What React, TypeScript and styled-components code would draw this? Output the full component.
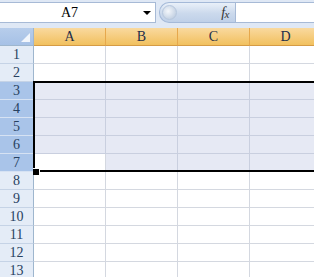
import styled, { createGlobalStyle } from 'styled-components';

const GlobalStyle = createGlobalStyle`
  html, body { margin: 0; padding: 0; background: #fff; }
  body { font-family: "Liberation Serif", "DejaVu Serif", serif; }
`;

const Window = styled.div`
  position: relative;
  width: 314px;
  height: 277px;
  overflow: hidden;
  background: #fff;
`;

const FormulaBar = styled.div`
  display: flex;
  align-items: stretch;
  height: 28px;
  padding: 2px 0 5px;
  box-sizing: border-box;
  background: #dfe8f5;
`;

const NameBox = styled.div`
  position: relative;
  display: flex;
  align-items: center;
  justify-content: center;
  width: 156px;
  background: #fff;
  border: 1px solid #a7bad6;
  border-left: none;
  box-sizing: border-box;
  font-size: 14px;
  color: #000;
  padding-right: 16px;
`;

const Arrow = styled.span`
  position: absolute;
  right: 4px;
  top: 8px;
  width: 0;
  height: 0;
  border-left: 4px solid transparent;
  border-right: 4px solid transparent;
  border-top: 4px solid #000;
`;

const FxButton = styled.div`
  display: flex;
  align-items: center;
  justify-content: space-between;
  width: 76px;
  margin-left: 3px;
  padding: 0 6px 0 2px;
  box-sizing: border-box;
  border: 1px solid #a4b9d8;
  border-right: none;
  border-radius: 10px 0 0 10px;
  background: linear-gradient(#e9f0f9, #cbd9ec 55%, #bfd0e8);
`;

const Knob = styled.span`
  width: 13px;
  height: 13px;
  border-radius: 50%;
  background: radial-gradient(circle at 40% 40%, #f4f7fb, #c6d3e4 70%, #aebfd6);
  border: 1px solid #b7c7dd;
`;

const Fx = styled.span`
  font-family: "Liberation Serif", "DejaVu Serif", serif;
  font-style: italic;
  font-size: 14px;
  color: #333;
  letter-spacing: -0.5px;

  & sub {
    font-size: 11px;
    vertical-align: -1px;
  }
`;

const FormulaInput = styled.div`
  flex: 1;
  background: #fff;
  border: 1px solid #a7bad6;
  border-right: none;
`;

const Sheet = styled.div`
  position: relative;
  display: grid;
  grid-template-columns: 34px repeat(4, 72px);
  grid-auto-rows: 18px;
`;

const Corner = styled.div`
  position: relative;
  background: linear-gradient(#b7cdeb, #a6c1e6);
  border-right: 1px solid #9eb6ce;
  border-bottom: 1px solid #9eb6ce;
  box-sizing: border-box;
`;

const CornerMark = styled.span`
  position: absolute;
  right: 3px;
  bottom: 3px;
  width: 0;
  height: 0;
  border-left: 9px solid transparent;
  border-bottom: 9px solid #f2f6fc;
`;

const ColHeader = styled.div`
  display: flex;
  align-items: center;
  justify-content: center;
  background: linear-gradient(#f9d99f, #f5ca78 60%, #f1c15f);
  border-right: 1px solid #e6a84c;
  border-bottom: 1px solid #d59b45;
  box-sizing: border-box;
  font-size: 14px;
  color: #1f2f4a;
`;

const RowHeader = styled.div<{ $selected: boolean }>`
  display: flex;
  align-items: center;
  justify-content: center;
  background: ${({ $selected }) => ($selected ? '#a9c4e9' : '#e4ecf7')};
  border-right: 1px solid #9eb6ce;
  border-bottom: 1px solid ${({ $selected }) => ($selected ? '#d6e2f3' : '#c5d3e6')};
  box-sizing: border-box;
  font-size: 14px;
  color: #27415f;
`;

const Cell = styled.div<{ $selected: boolean }>`
  background: ${({ $selected }) => ($selected ? '#e6e9f4' : '#fff')};
  border-right: 1px solid ${({ $selected }) => ($selected ? '#c9cfdf' : '#d4d8e0')};
  border-bottom: 1px solid ${({ $selected }) => ($selected ? '#c9cfdf' : '#d4d8e0')};
  box-sizing: border-box;
`;

const Selection = styled.div`
  position: absolute;
  left: 33px;
  top: 53px;
  width: 300px;
  height: 91px;
  border-top: 2px solid #000;
  border-bottom: 2px solid #000;
  border-left: 2px solid #000;
  box-sizing: border-box;
  pointer-events: none;
`;

const FillHandle = styled.div`
  position: absolute;
  left: 33px;
  top: 140px;
  width: 6px;
  height: 6px;
  background: #000;
  border-right: 1px solid #fff;
  border-top: 1px solid #fff;
`;

const COLUMNS = ['A', 'B', 'C', 'D'];
const ROWS = Array.from({ length: 13 }, (_, i) => i + 1);
const ACTIVE_ROW = 7;

export default function App() {
  return (
    <>
      <GlobalStyle />
      <Window>
        <FormulaBar>
          <NameBox>
            A7
            <Arrow />
          </NameBox>
          <FxButton>
            <Knob />
            <Fx>f<sub>x</sub></Fx>
          </FxButton>
          <FormulaInput />
        </FormulaBar>
        <Sheet>
          <Corner>
            <CornerMark />
          </Corner>
          {COLUMNS.map(c => (
            <ColHeader key={c}>{c}</ColHeader>
          ))}
          {ROWS.map(r => {
            const selected = r >= 3 && r <= 7;
            return [
              <RowHeader key={`h${r}`} $selected={selected}>{r}</RowHeader>,
              ...COLUMNS.map((c, ci) => (
                <Cell
                  key={`${c}${r}`}
                  $selected={selected && !(r === ACTIVE_ROW && ci === 0)}
                />
              )),
            ];
          })}
          <Selection />
          <FillHandle />
        </Sheet>
      </Window>
    </>
  );
}
